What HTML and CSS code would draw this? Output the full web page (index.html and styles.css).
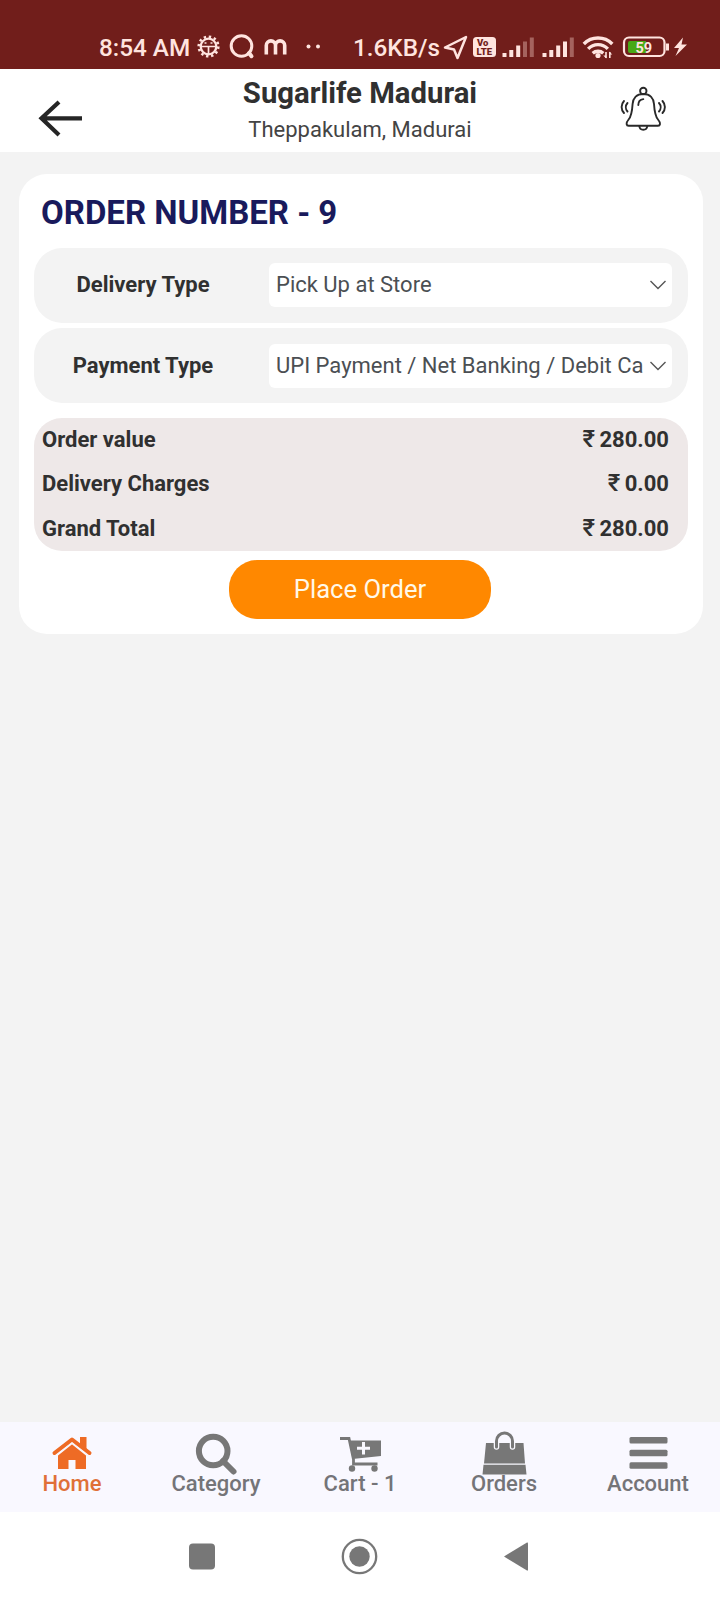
FILE: index.html
```html
<!DOCTYPE html>
<html lang="en">
<head>
<meta charset="utf-8">
<title>Sugarlife Madurai</title>
<link rel="stylesheet" href="styles.css">
</head>
<body>
<div class="screen">
  <div class="status">
    <span class="status-time">8:54 AM</span>
    <svg class="status-left" width="130" height="40" viewBox="195 27 130 40" fill="none" stroke="#ffe4df" stroke-width="2.4">
      <circle cx="208.500" cy="46.500" r="7.800" stroke-width="2.300"/>
      <circle cx="208.500" cy="46.500" r="9.800" stroke-width="2.600" stroke-dasharray="2.400 2.730"/>
      <path d="M201 46.500h15M208.500 46.500v8" stroke-width="1.700"/>
      <path d="M204.500 43h2M210.500 43h2" stroke-width="1.500"/>
      <circle cx="241.500" cy="46" r="10.300" stroke-width="3"/>
      <path d="M249 53l2.500 3.200" stroke-width="4" stroke-linecap="round"/>
      <path d="M266.300 54.500v-9a4.600 4.600 0 0 1 9.200 0v9M275.500 54.500v-9a4.600 4.600 0 0 1 9.200 0v9" stroke-width="3.600"/>
      <g fill="#ffe4df" stroke="none"><circle cx="308.500" cy="46.500" r="2"/><circle cx="318" cy="46.500" r="2"/></g>
    </svg>
    <span class="status-speed">1.6KB/s</span>
    <svg class="status-right" width="250" height="40" viewBox="440 27 250 40" fill="none" stroke="#ffe4df">
      <path d="M445 47.500l21-10.500-8.500 21-3.500-8.500z" stroke-width="2.500" stroke-linejoin="round"/>
      <rect x="473" y="37" width="23" height="20" rx="3.500" fill="#ffe4df" stroke="none"/>
      <g fill="#711e1b" stroke="none" class="volte"><text x="477" y="46">Vo</text><text x="476.500" y="55.300">LTE</text></g>
      <g stroke-width="4">
        <path d="M504.500 57v-4M511.300 57v-7M518.200 57v-11.500"/><path d="M525 57v-15.500M531.800 57v-19.500" stroke="#a5635e"/>
        <path d="M544.500 57v-4M551.300 57v-7M558.200 57v-11.500M565 57v-15.500"/><path d="M571.800 57v-19.500" stroke="#a5635e"/>
      </g>
      <g stroke-width="3.400"><path d="M583.800 44a20 20 0 0 1 28.500 0M588.200 48.800a13.500 13.500 0 0 1 19.600 0M592.700 53.200a8 8 0 0 1 10.600 0"/></g>
      <circle cx="598" cy="55.500" r="2.600" fill="#ffe4df" stroke="none"/>
      <path d="M606 52v6M609.800 52v6" stroke-width="1.600"/><path d="M603.300 55.500h3v3zM612.300 54.500h-3v-3z" fill="#ffe4df" stroke="none"/>
      <rect x="624" y="37.500" width="40.500" height="18.500" rx="5" stroke-width="2.200"/>
      <path d="M630 41h16v12h-16a2 2 0 0 1-2-2v-8a2 2 0 0 1 2-2z" fill="#48a915" stroke="none"/>
      <path d="M667.500 43.500v7" stroke-width="3"/>
      <text x="635.500" y="52.500" class="batt">59</text>
      <path d="M683 37.500l-9 10.500h5l-3.500 8 11.500-11.500h-5.500z" fill="#ffe4df" stroke="none"/>
    </svg>
  </div>

  <header class="header">
    <svg class="back" width="48" height="40" viewBox="36 98 48 40" fill="none" stroke="#252525" stroke-width="4.200"><path d="M82 118.300H41M59 102L41.500 118.300 59 135"/></svg>
    <div class="heading"><h1 class="shop">Sugarlife Madurai</h1><p class="place">Theppakulam, Madurai</p></div>
    <svg class="bell" width="50" height="50" viewBox="618 84 50 50" fill="none" stroke="#292929" stroke-width="1.900" stroke-linecap="round" stroke-linejoin="round">
      <circle cx="643.300" cy="91" r="3.200"/>
      <path d="M643.300 94c-7 0-10.300 4.500-10.700 10-.5 8-1 12-4 15.500-1.700 2-2.300 3-2 4.500.2 1.300 1 1.700 2 1.700h29.400c1 0 1.800-.4 2-1.700.3-1.500-.3-2.500-2-4.500-3-3.500-3.500-7.500-4-15.500-.4-5.500-3.700-10-10.700-10z"/>
      <path d="M639.300 126c.5 5 7.500 5 8 0M638.300 105c0-3.500 2-5.500 5-5.900M627.500 103c-2.200 2.500-2.200 6 0 8.500M624 101c-3.200 3.500-3.200 8.500 0 12M659 103c2.200 2.500 2.200 6 0 8.500M662.500 101c3.200 3.500 3.200 8.500 0 12"/>
    </svg>
  </header>

  <main class="content">
    <section class="card">
      <h2 class="title">ORDER NUMBER - 9</h2>
      <div class="row"><label class="label">Delivery Type</label>
        <div class="select"><span class="value">Pick Up at Store</span><svg class="chev" width="18" height="12" viewBox="0 0 18 12"><path d="M1.500 2L9 9.500 16.500 2"/></svg></div></div>
      <div class="row"><label class="label">Payment Type</label>
        <div class="select"><span class="value">UPI Payment / Net Banking / Debit Ca</span><svg class="chev" width="18" height="12" viewBox="0 0 18 12"><path d="M1.500 2L9 9.500 16.500 2"/></svg></div></div>
      <div class="summary">
        <div class="line"><span>Order value</span><span class="amount"><span class="rupee">₹</span> 280.00</span></div>
        <div class="line"><span>Delivery Charges</span><span class="amount"><span class="rupee">₹</span> 0.00</span></div>
        <div class="line"><span>Grand Total</span><span class="amount"><span class="rupee">₹</span> 280.00</span></div>
      </div>
      <button class="place-order">Place Order</button>
    </section>
  </main>

  <nav class="tabs">
    <a class="tab tab-active"><svg class="tab-icon" width="48" height="48" viewBox="48 1428 48 48">
      <path d="M58 1469v-14.500l14-11.500 14 11.500V1469h-10.500v-9h-7v9z" fill="#ee6b25"/>
      <path d="M54.500 1453L72 1439.500 89.500 1453" fill="none" stroke="#ee6b25" stroke-width="4" stroke-linecap="round" stroke-linejoin="round"/>
      <path d="M80 1437h6.500v12.500l-6.500-5z" fill="#ee6b25"/>
      <path d="M56 1456.200L72 1443.500l16 12.700" fill="none" stroke="#f9f8ff" stroke-width="1.500"/></svg><span class="tab-label">Home</span></a>
    <a class="tab"><svg class="tab-icon" width="48" height="48" viewBox="192 1428 48 48" fill="none" stroke="#777">
      <circle cx="213.200" cy="1451" r="14.300" stroke-width="6"/><path d="M223 1461l10.500 10.500" stroke-width="6" stroke-linecap="round"/></svg><span class="tab-label">Category</span></a>
    <a class="tab"><svg class="tab-icon" width="48" height="48" viewBox="336 1428 48 48">
      <path d="M340 1438.500h9l4.500 21v4.500h24" fill="none" stroke="#777" stroke-width="2.800"/>
      <path d="M349 1440.500h32v15.500l-28.500 3z" fill="#777"/><circle cx="352" cy="1468.500" r="3.200" fill="#777"/><circle cx="374.500" cy="1468.500" r="3.200" fill="#777"/>
      <path d="M357 1448.300h13M363.500 1442v12.600" stroke="#f9f8ff" stroke-width="3"/></svg><span class="tab-label">Cart - 1</span></a>
    <a class="tab"><svg class="tab-icon" width="48" height="48" viewBox="480 1428 48 48">
      <path d="M486 1443h37.500l1.500 20.500h-41zM483.500 1464.700h42l1 9.800h-44z" fill="#777"/>
      <path d="M496.500 1447v-6a8 8 0 0 1 16 0v6" fill="none" stroke="#f9f8ff" stroke-width="5.500" stroke-linecap="round"/>
      <path d="M496.500 1447v-6a8 8 0 0 1 16 0v6" fill="none" stroke="#777" stroke-width="3" stroke-linecap="round"/></svg><span class="tab-label">Orders</span></a>
    <a class="tab"><svg class="tab-icon" width="48" height="48" viewBox="624 1428 48 48" fill="#777">
      <rect x="629.500" y="1437" width="38" height="6.500" rx="1.500"/><rect x="629.500" y="1449.700" width="38" height="6.500" rx="1.500"/><rect x="629.500" y="1462.300" width="38" height="6.500" rx="1.500"/></svg><span class="tab-label">Account</span></a>
  </nav>
  <div class="sysnav">
    <svg width="360" height="40" viewBox="180 1536 360 40" fill="#777"><rect x="189" y="1543.500" width="26" height="26" rx="4"/><circle cx="359.500" cy="1556.500" r="10.200"/><circle cx="359.500" cy="1556.500" r="16.700" fill="none" stroke="#777" stroke-width="2.300"/><path d="M504 1556.500L527 1542.500q1-.5 1 1v26q0 1.500-1 1z"/></svg>
  </div>
</div>
</body>
</html>
```
FILE: styles.css
```css
* { box-sizing: border-box; margin: 0; padding: 0; }
body { font-family: Roboto, "Liberation Sans", sans-serif; color: #303030; }
.screen { width: 720px; height: 1600px; display: flex; flex-direction: column; background: #f3f3f3; overflow: hidden; }
.status { height: 69px; flex: none; background: #711e1b; display: flex; align-items: flex-start; padding: 27px 0 0 99px; color: #ffe4df; font-size: 24.3px; line-height: 41px; font-weight: 500; white-space: nowrap; }
.status-time { width: 96px; }
.status-left { flex: none; }
.status-speed { width: 87px; margin-left: 28px; }
.status-right { flex: none; }
.volte { font-size: 9.5px; font-weight: 900; }
.batt { font-size: 14.5px; font-weight: 700; fill: #ffe4df; stroke: none; }
.header { height: 83px; flex: none; background: #fff; display: grid; grid-template-columns: 48px 1fr 50px; padding: 0 52px 0 36px; }
.back { margin-top: 29px; }
.bell { margin-top: 15px; }
.heading { text-align: center; padding: 6px 0 0 18px; }
.shop { font-size: 29.3px; line-height: 36px; font-weight: 700; }
.place { font-size: 22px; line-height: 38px; color: #444; }
.content { flex: 1; padding: 22px 17px 0 19px; }
.card { height: 460px; background: #fff; border-radius: 28px; padding: 12px 15px 0; display: flex; flex-direction: column; }
.title { font-size: 33px; line-height: 54px; font-weight: 700; color: #191a5c; padding-left: 7px; margin-bottom: 7.500px; white-space: nowrap; }
.row { height: 75px; flex: none; border-radius: 28px; background: #f3f3f3; display: flex; align-items: center; padding-right: 16px; margin-bottom: 5.500px; }
.label { width: 235px; padding-right: 17px; text-align: center; font-size: 22px; line-height: 26px; font-weight: 700; }
.select { flex: 1; height: 44px; background: #fff; border-radius: 6px; display: flex; align-items: center; justify-content: space-between; padding: 0 5px 0 7px; }
.value { font-size: 22px; line-height: 26px; color: #4b4f53; white-space: nowrap; }
.chev { flex: none; fill: none; stroke: #555; stroke-width: 1.400; }
.summary { height: 133px; flex: none; margin-top: 9.500px; background: #eee8e8; border-radius: 28px; padding: 0 19px 0 8px; }
.line { display: flex; justify-content: space-between; height: 44.300px; line-height: 44px; font-size: 22px; font-weight: 700; }
.amount { word-spacing: -1px; }
.rupee { font-size: 24px; line-height: 1; font-weight: 500; }
.place-order { align-self: center; position: relative; left: -1px; margin-top: 9px; width: 262px; height: 59px; border: 0; border-radius: 28px; background: #ff8800; color: #fff8e8; font-family: inherit; font-size: 25.6px; padding-bottom: 1px; }
.tabs { height: 90px; flex: none; background: #f9f8ff; display: grid; grid-template-columns: repeat(5, 1fr); }
.tab { display: flex; flex-direction: column; align-items: center; padding-top: 6px; color: #747478; }
.tab-active { color: #e07038; }
.tab-label { font-size: 22px; line-height: 26px; margin-top: -5px; font-weight: 500; }
.sysnav { height: 88px; flex: none; background: #fff; display: flex; justify-content: center; padding-top: 24px; }
```
